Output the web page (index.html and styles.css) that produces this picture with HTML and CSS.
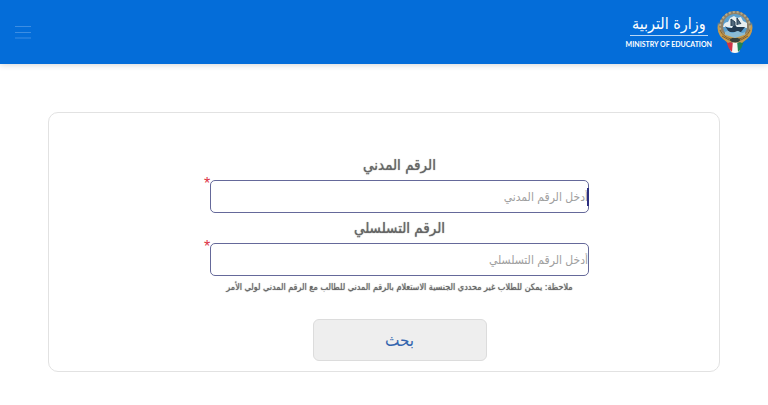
FILE: index.html
```html
<!DOCTYPE html>
<html lang="ar" dir="rtl">
<head>
<meta charset="utf-8">
<meta name="viewport" content="width=device-width, initial-scale=1">
<title>وزارة التربية</title>
<link rel="stylesheet" href="styles.css">
</head>
<body>
<header class="topbar">
  <a class="brand" href="#">
    <svg class="emblem" viewBox="0 0 38 44" aria-hidden="true">
      <path d="M11 31l3-3h10l3 3-4 11q-4 2-8 0z" fill="#f8f8f4"/>
      <path d="M10 30h7l-1 12q-4-3-6-12z" fill="#cf3445"/>
      <path d="M28 30h-7l1 12q4-3 6-12z" fill="#218356"/>
      <circle cx="19" cy="17" r="16" fill="#8e8068"/>
      <circle cx="19" cy="17" r="15" fill="none" stroke="#b5ab8a" stroke-width="2" stroke-dasharray="2 2"/>
      <circle cx="19" cy="16" r="12" fill="#5b9fce"/>
      <path d="M7 17q1-5 5-5l2-4 4-2 3 2 4-1 2 4 4 2v5l-6-1-5 2-8-2z" fill="#e8eff1"/>
      <path d="M9 16l3 2h4l2-4 3 3h8l-4 5H13z" fill="#233a50"/>
      <path d="M15 16V9l4 3v4M21 15V8l4 6" fill="#50677a" stroke="#253c51"/>
      <path d="M9 22q3-2 5 0t5 0 5 0 5 0v3q-10 6-20 0z" fill="#8cbbd3"/>
      <path d="M2 12Q0 24 7 29l5 4 7-3 7 3 5-4q7-5 5-17-2 11-8 13l-9 3-9-3Q4 23 2 12z" fill="#c79b4c"/>
      <path d="M4 20q3 7 11 9M34 20q-3 7-11 9M6 26l7 4M32 26l-7 4" fill="none" stroke="#80602f"/>
      <path d="M13 30l3-2h6l3 2-3 2h-6z" fill="#394039"/>
    </svg>
    <span class="brand-text">
      <span class="brand-ar">وزارة التربية</span>
      <span class="brand-en" dir="ltr">MINISTRY OF EDUCATION</span>
    </span>
  </a>
  <button class="menu" type="button" aria-label="القائمة">
    <svg viewBox="0 0 18 14" aria-hidden="true"><path d="M1 1.5h16M1 7.5h16M1 13h16" stroke="currentColor"/></svg>
  </button>
</header>
<main class="page">
  <form class="card">
    <label class="label" for="civil">الرقم المدني</label>
    <div class="field">
      <input class="input" id="civil" type="text" placeholder="أدخل الرقم المدني">
      <span class="required">*</span>
      <span class="caret"></span>
    </div>
    <label class="label" for="serial">الرقم التسلسلي</label>
    <div class="field">
      <input class="input" id="serial" type="text" placeholder="أدخل الرقم التسلسلي">
      <span class="required">*</span>
    </div>
    <p class="note">ملاحظة: يمكن للطلاب غير محددي الجنسية الاستعلام بالرقم المدني للطالب مع الرقم المدني لولي الأمر</p>
    <button class="search" type="button">بحث</button>
  </form>
</main>
</body>
</html>
```
FILE: styles.css
```css
* { box-sizing: border-box; }
body {
  margin: 0;
  background: #fff;
  color: #666;
  font-family: "DejaVu Sans Condensed", "DejaVu Sans", sans-serif;
}
.topbar {
  display: flex;
  align-items: center;
  justify-content: space-between;
  height: 64px;
  padding: 0 14px;
  background: #046dd9;
  box-shadow: 0 1px 6px rgba(0, 0, 0, .16);
}
.brand {
  display: flex;
  align-items: center;
  gap: 4px;
  color: #fff;
  text-decoration: none;
}
.emblem { width: 38px; height: 44px; }
.brand-text {
  display: flex;
  flex-direction: column;
  align-items: center;
}
.brand-ar {
  padding: 0 2px;
  border-bottom: 1px solid #b8d6f5;
  font-size: 16px;
  line-height: 22px;
}
.brand-en {
  font: bold 7px/16px Lato, sans-serif;
}
.menu {
  display: flex;
  padding: 0;
  border: 0;
  background: none;
  color: #3d8ee3;
}
.menu svg { width: 18px; height: 14px; }
.page { padding: 48px; }
.card {
  display: flex;
  flex-direction: column;
  align-items: center;
  padding: 37px 0 10px 31px;
  border: 1px solid #e2e2e2;
  border-radius: 10px;
}
.label {
  font-size: 15px;
  line-height: 30px;
  text-shadow: 0 0 1px currentColor;
}
.field {
  position: relative;
  width: 379px;
  max-width: 90%;
}
.input {
  display: block;
  width: 100%;
  height: 33px;
  padding: 0;
  border: 1px solid #65699a;
  border-radius: 5px;
  background: #fff;
  color: #555;
  font: 12px "DejaVu Sans Condensed", "DejaVu Sans", sans-serif;
}
.input::placeholder { color: #a0a0a0; opacity: 1; }
.required {
  position: absolute;
  top: -6px;
  left: -6px;
  color: #dc3545;
  font: 16px/20px "Liberation Sans", sans-serif;
}
.caret {
  position: absolute;
  top: 8px;
  right: 0;
  width: 2px;
  height: 18px;
  background: #2d3080;
}
.note {
  margin: 0 0 20px;
  font-size: 9px;
  line-height: 23px;
  text-shadow: 0 0 1px currentColor;
}
.search {
  width: 174px;
  height: 42px;
  border: 1px solid #dcdcdc;
  border-radius: 6px;
  background: #eee;
  color: #3465ae;
  font: 17px "DejaVu Sans Condensed", "DejaVu Sans", sans-serif;
}
```
